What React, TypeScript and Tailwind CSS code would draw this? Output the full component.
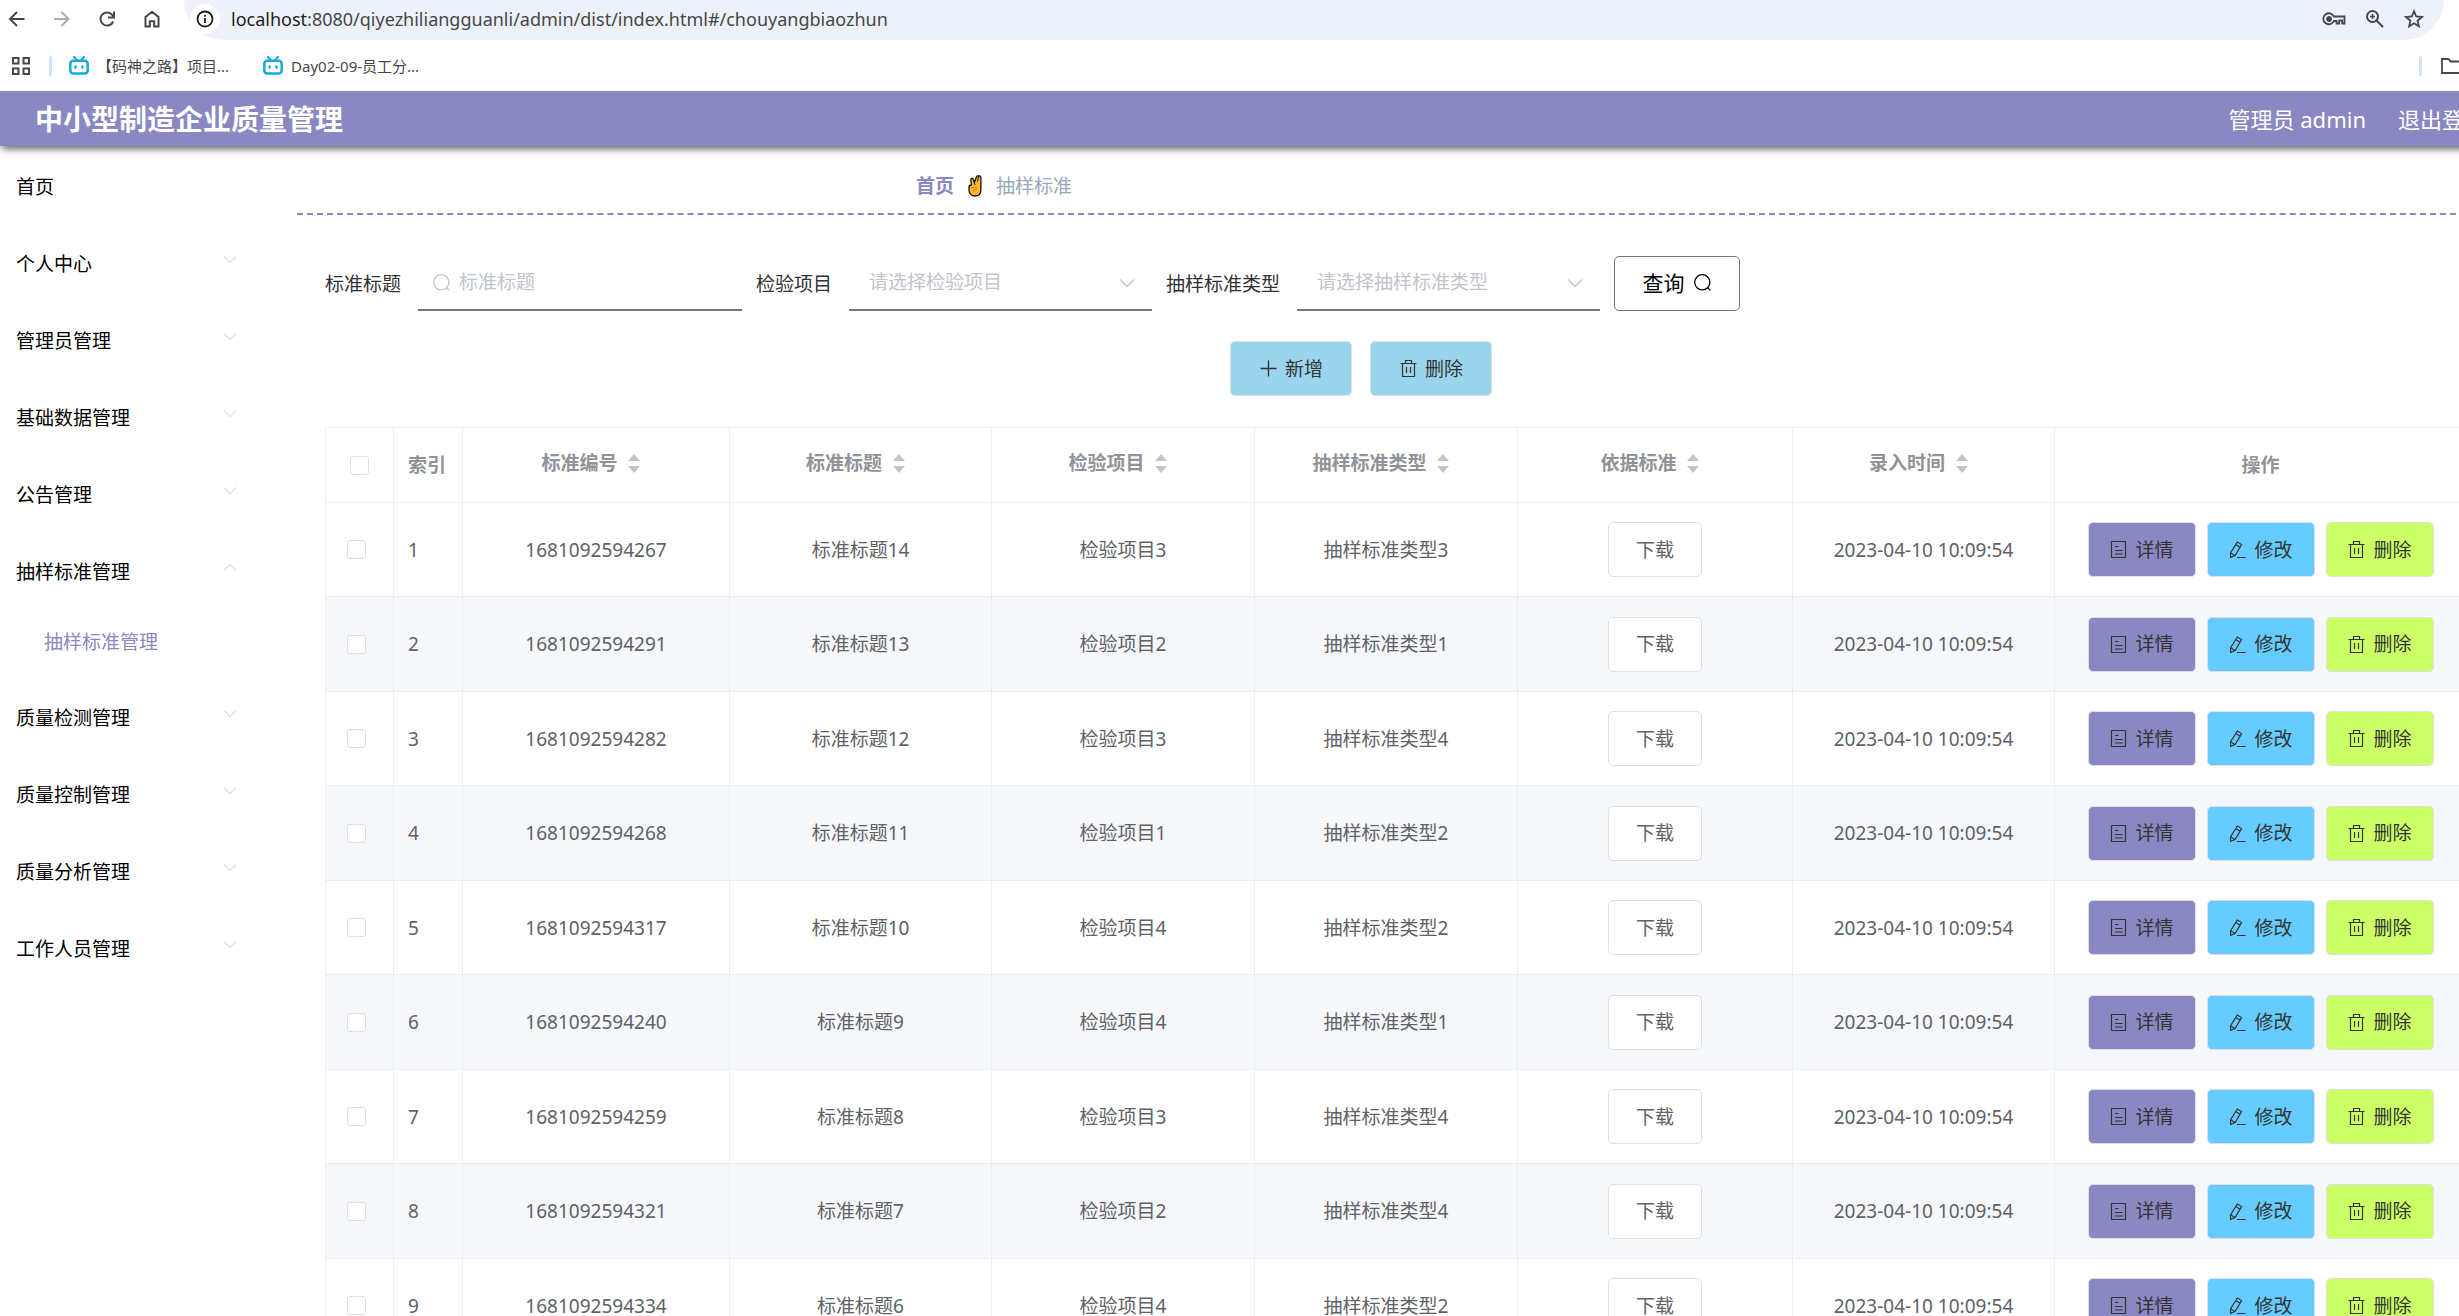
import React from 'react'

const menuItems = [
    { title: "首页" },
    { title: "个人中心", children: [] },
    { title: "管理员管理", children: [] },
    { title: "基础数据管理", children: [] },
    { title: "公告管理", children: [] },
    { title: "抽样标准管理", open: true, children: ["抽样标准管理"] },
    { title: "质量检测管理", children: [] },
    { title: "质量控制管理", children: [] },
    { title: "质量分析管理", children: [] },
    { title: "工作人员管理", children: [] },
];

const sortableColumns = ["标准编号", "标准标题", "检验项目", "抽样标准类型", "依据标准", "录入时间"];

const rows = [
    { id: 1, code: "1681092594267", title: "标准标题14", item: "检验项目3", type: "抽样标准类型3" },
    { id: 2, code: "1681092594291", title: "标准标题13", item: "检验项目2", type: "抽样标准类型1" },
    { id: 3, code: "1681092594282", title: "标准标题12", item: "检验项目3", type: "抽样标准类型4" },
    { id: 4, code: "1681092594268", title: "标准标题11", item: "检验项目1", type: "抽样标准类型2" },
    { id: 5, code: "1681092594317", title: "标准标题10", item: "检验项目4", type: "抽样标准类型2" },
    { id: 6, code: "1681092594240", title: "标准标题9", item: "检验项目4", type: "抽样标准类型1" },
    { id: 7, code: "1681092594259", title: "标准标题8", item: "检验项目3", type: "抽样标准类型4" },
    { id: 8, code: "1681092594321", title: "标准标题7", item: "检验项目2", type: "抽样标准类型4" },
    { id: 9, code: "1681092594334", title: "标准标题6", item: "检验项目4", type: "抽样标准类型2" },
];

const createdAt = "2023-04-10 10:09:54";

const SearchIcon = () => (
  <svg className="w-[19px] h-[19px] shrink-0" viewBox="0 0 19 19" fill="none" stroke="currentColor" strokeWidth="1.3">
    <circle cx="9.3" cy="9.3" r="7.6" />
    <path d="M14.6 14.6l2.8 2.8" />
  </svg>
)

const PlusIcon = () => (
  <svg className="w-[19px] h-[19px] shrink-0" viewBox="0 0 19 19" fill="none" stroke="currentColor" strokeWidth="1.3">
    <path d="M1.5 9.5h16M9.5 1.5v16" />
  </svg>
)

const DeleteIcon = () => (
  <svg className="w-[19px] h-[19px] shrink-0" viewBox="0 0 19 19" fill="none" stroke="currentColor" strokeWidth="1.2">
    <path d="M1.5 4.5h16M6.5 4.5v-3h6v3M3.5 4.5v13h12v-13M7.5 8v6M11.5 8v6" />
  </svg>
)

const DetailIcon = () => (
  <svg className="w-[19px] h-[19px] shrink-0" viewBox="0 0 19 19" fill="none" stroke="currentColor" strokeWidth="1.2">
    <path d="M2.5 1.5h14v16h-14zM6 6.5h3.5M6 10.5h7.5M6 14h7.5" />
  </svg>
)

const EditIcon = () => (
  <svg className="w-[19px] h-[19px] shrink-0" viewBox="0 0 19 19" fill="none" stroke="currentColor" strokeWidth="1.2">
    <path d="M9.3 2l4.3 2.6-6.5 11L2.6 17.4 2.5 13zM7.8 4.6l4.3 2.6M2.6 13l4.5 2.6M9 17.5h8.5" />
  </svg>
)

const ChevronIcon = ({ up = false, className = "" }: { up?: boolean; className?: string }) => (
  <svg className={className} viewBox="0 0 16 10" fill="none" stroke="currentColor" strokeWidth="1.5">
    <path d={up ? "M1 8.5l7-7 7 7" : "M1 1.5l7 7 7-7"} />
  </svg>
)

const SortIcon = () => (
  <span className="w-[33px] h-[20px] flex items-center justify-center">
    <svg className="w-3 h-[19px] text-[#c0c4cc]" viewBox="0 0 12 19" fill="currentColor">
      <path d="M6 0l6 7H0zM0 12h12l-6 7z" />
    </svg>
  </span>
)

const VictoryIcon = () => (
  <svg className="w-[14px] h-[22px]" viewBox="0 0 14 22" stroke="#111" strokeWidth="1.3" strokeLinejoin="round">
    <path
      d="M1 12.5c0-2 1-2.5 2.5-2.5L2.8 5c-.2-2 2-2.4 2.5-.6l1 3L8.5 1.8c.6-1.5 1.8-1 2-.4.4-1 2.3-.9 2.4.8V14.5c0 4-2 6.5-5.8 6.5S1 18.5 1 15z"
      fill="#fdb92e"
    />
    <path d="M6.3 7.5l.8 2.5M10.5 1.6l-1 5" fill="none" strokeWidth="1" />
    <path d="M3 12.5h5c1.5 0 1.5 2 0 2H5.5M6 14.5V17" fill="none" stroke="#d98612" strokeWidth="1" />
  </svg>
)

const BilibiliIcon = () => (
  <svg className="w-[20px] h-[19px] shrink-0" viewBox="0 0 20 19" fill="none" stroke="#12a8e0">
    <rect x="1.3" y="4.8" width="17.4" height="12.6" rx="3" strokeWidth="2.5" />
    <path d="M5 1l2.8 3M15 1l-2.8 3" strokeWidth="2" strokeLinecap="round" />
    <path d="M6.5 10v2M13.5 10v2" strokeWidth="2" strokeLinecap="round" />
  </svg>
)

const BrowserBar = () => (
  <div className="text-[#474747]">
    <div className="flex items-start h-10 pl-2 pr-[15px]">
      <div className="flex items-center gap-[27px] h-[38px]">
        <button type="button" aria-label="后退">
          <svg className="w-[18px] h-[18px]" viewBox="0 0 18 18" fill="none" stroke="currentColor" strokeWidth="2">
            <path d="M16.5 9H2M9 2L2 9l7 7" />
          </svg>
        </button>
        <button type="button" aria-label="前进" className="text-[#ababab]">
          <svg className="w-[18px] h-[18px]" viewBox="0 0 18 18" fill="none" stroke="currentColor" strokeWidth="2">
            <path d="M1 9h14.5M8.5 2l7 7-7 7" />
          </svg>
        </button>
        <button type="button" aria-label="刷新">
          <svg className="w-[18px] h-[18px]" viewBox="0 0 18 18" fill="none" stroke="currentColor" strokeWidth="2">
            <path d="M15.2 11.5A6.6 6.6 0 1 1 14.5 5.2L16 7.2M16 1.5v6h-6" />
          </svg>
        </button>
        <button type="button" aria-label="主页">
          <svg className="w-[18px] h-[18px]" viewBox="0 0 18 18" fill="none" stroke="currentColor" strokeWidth="2">
            <path d="M2.5 7L9 1.8 15.5 7v9.5h-4.3v-5.3H6.8v5.3H2.5z" />
          </svg>
        </button>
      </div>
      <div className="flex flex-1 items-center h-10 ml-[23px] pl-[6px] pr-5 pb-[2px] bg-[#ecf1fa] rounded-b-full">
        <span className="flex items-center justify-center w-[30px] h-[30px] rounded-full bg-white">
          <svg className="w-[18px] h-[18px] text-[#1f1f1f]" viewBox="0 0 18 18" fill="none" stroke="currentColor" strokeWidth="1.8">
            <circle cx="9" cy="9" r="7.5" />
            <path d="M9 8v5M9 5v1.8" />
          </svg>
        </span>
        <span className="flex-1 ml-[11px] text-[18px] leading-6">
          <span className="text-[#1f1f1f]">localhost</span>:8080/qiyezhiliangguanli/admin/dist/index.html#/chouyangbiaozhun
        </span>
        <div className="flex items-center gap-[19px]">
          <svg className="w-[24px] h-[18px]" viewBox="0 0 24 18" fill="none" stroke="currentColor" strokeWidth="1.8">
            <path d="M11.8 6.5h10.7v7h-2.3v-3h-3v3h-2.7V11h-2.7a5.5 5.5 0 1 1 0-4.5z" />
            <circle cx="7" cy="9" r="2" fill="currentColor" />
          </svg>
          <svg className="w-[20px] h-[20px]" viewBox="0 0 20 20" fill="none" stroke="currentColor" strokeWidth="2">
            <circle cx="7.5" cy="7.5" r="5.5" />
            <path d="M11.5 11.5L18 18" />
            <path d="M7.5 5v5M5 7.5h5" strokeWidth="1.5" />
          </svg>
          <svg className="w-[20px] h-[20px]" viewBox="0 0 20 20" fill="none" stroke="currentColor" strokeWidth="1.8">
            <path d="M10 2.2l2.2 5.3 5.7.5-4.3 3.7 1.3 5.6-4.9-3-4.9 3 1.3-5.6L2.1 8l5.7-.5z" />
          </svg>
        </div>
      </div>
    </div>

    <div className="flex items-center h-[51px] pl-3 text-[15px] leading-5">
      <svg className="w-[18px] h-[18px]" viewBox="0 0 18 18" fill="none" stroke="currentColor" strokeWidth="2">
        <path d="M1 1h5.5v5.5H1zM11.5 1H17v5.5h-5.5zM1 11.5h5.5V17H1zM11.5 11.5H17V17h-5.5z" />
      </svg>
      <span className="w-[3px] h-5 ml-[19px] rounded bg-[#d3e3fd]" />
      <a href="#" className="flex items-center gap-2 ml-[17px]">
        <BilibiliIcon />
        【码神之路】项目...
      </a>
      <a href="#" className="flex items-center gap-2 ml-[34px]">
        <BilibiliIcon />
        Day02-09-员工分...
      </a>
      <div className="flex items-center gap-[19px] ml-auto -mr-1">
        <span className="w-[3px] h-5 rounded bg-[#d3e3fd]" />
        <svg className="w-[22px] h-[18px]" viewBox="0 0 22 18" fill="none" stroke="currentColor" strokeWidth="1.8">
          <path d="M1 2h6.5l2 2.5H21V16H1z" />
        </svg>
      </div>
    </div>
  </div>
)

const Header = () => (
  <header className="relative flex items-center justify-between h-[55px] pl-[35px] bg-[#8a88c2] text-white shadow-[0_5px_7px_-2px_rgba(0,0,0,0.6)]">
    <h1 className="text-[28px] leading-9 font-bold">中小型制造企业质量管理</h1>
    <div className="flex gap-8 text-[22px] leading-8">
      <span>管理员 admin</span>
      <a href="#" className="whitespace-nowrap">退出登录</a>
    </div>
  </header>
)

const Sidebar = () => (
  <nav className="w-[297px] shrink-0 pt-[2px] text-black">
    {menuItems.map((menu) => (
      <div key={menu.title}>
        <button type="button" className="flex items-center justify-between w-full h-[77px] pl-4 pr-[60px]">
          {menu.title}
          {menu.children && (
            <ChevronIcon up={menu.open} className="w-[14px] h-[9px] mb-2 text-[#e0e1ea]" />
          )}
        </button>
        {menu.children?.map((child) => (
          <a key={child} href="#" className="block h-[69px] pl-[44px] leading-[64px] text-[#8a88c2]">
            {child}
          </a>
        ))}
      </div>
    ))}
  </nav>
)

const FilterSelect = ({ id, label, placeholder }: { id: string; label: string; placeholder: string }) => (
  <div className="flex items-center gap-[17px]">
    <label htmlFor={id}>{label}</label>
    <div className="relative w-[303px] h-[55px]">
      <select
        id={id}
        className="w-full h-full px-5 pb-[2px] appearance-none bg-white border-b-2 border-[#777] text-[#c0c4cc] outline-none"
      >
        <option>{placeholder}</option>
      </select>
      <ChevronIcon className="absolute right-[17px] top-[22px] w-4 h-[10px] text-[#c0c4cc] pointer-events-none" />
    </div>
  </div>
)

const SearchForm = () => (
  <form className="flex items-center gap-[14px] text-[#303133]">
    <div className="flex items-center gap-[17px]">
      <label htmlFor="title">标准标题</label>
      <div className="flex items-center gap-2 w-[324px] h-[55px] pl-[14px] border-b-2 border-[#777] text-[#c0c4cc]">
        <SearchIcon />
        <input
          id="title"
          type="text"
          placeholder="标准标题"
          className="flex-1 min-w-0 pb-[2px] outline-none placeholder:text-[#c0c4cc]"
        />
      </div>
    </div>
    <FilterSelect id="item" label="检验项目" placeholder="请选择检验项目" />
    <FilterSelect id="type" label="抽样标准类型" placeholder="请选择抽样标准类型" />
    <button
      type="button"
      className="flex items-center justify-center gap-2 w-[126px] h-[55px] pb-[2px] border border-[#777] rounded-[5px] text-[21px] text-black"
    >
      查询
      <SearchIcon />
    </button>
  </form>
)

const actionClass = "flex items-center justify-center gap-[7px] h-[55px] border border-[#dcdfe6] rounded-[5px] text-[#333]"

const StandardTable = () => (
  <table className="w-full table-fixed border-separate border-spacing-0 border-l border-t border-[#ebeef5] text-center text-[#606266]">
    <colgroup>
      <col className="w-[68px]" />
      <col className="w-[69px]" />
      <col className="w-[267px]" />
      <col className="w-[262px]" />
      <col className="w-[263px]" />
      <col className="w-[263px]" />
      <col className="w-[275px]" />
      <col className="w-[262px]" />
      <col className="w-[412px]" />
    </colgroup>
    <thead>
      <tr className="h-[75px] text-[#909399] [&>th]:border-r [&>th]:border-b [&>th]:border-[#ebeef5]">
        <th>
          <input
            type="checkbox"
            aria-label="全选"
            className="block mx-auto w-[19px] h-[19px] appearance-none bg-white border border-[#dcdfe6] rounded-[3px]"
          />
        </th>
        <th className="pl-[14px] text-left">索引</th>
        {sortableColumns.map((column) => (
          <th key={column}>
            <div className="flex items-center justify-center pb-1">
              {column}
              <SortIcon />
            </div>
          </th>
        ))}
        <th>操作</th>
      </tr>
    </thead>
    <tbody>
      {rows.map((row) => (
        <tr
          key={row.id}
          className="h-[94px] even:h-[95px] even:bg-[#f5f7fb] [&>td]:border-r [&>td]:border-b [&>td]:border-[#ebeef5]"
        >
          <td className="pl-[21px]">
            <input
              type="checkbox"
              aria-label={row.title}
              className="block w-[19px] h-[19px] appearance-none bg-white border border-[#dcdfe6] rounded-[3px]"
            />
          </td>
          <td className="pl-[14px] text-left">{row.id}</td>
          <td>{row.code}</td>
          <td>{row.title}</td>
          <td>{row.item}</td>
          <td>{row.type}</td>
          <td>
            <button type="button" className="w-[94px] h-[55px] bg-white border border-[#dcdfe6] rounded-[5px]">
              下载
            </button>
          </td>
          <td>{createdAt}</td>
          <td>
            <div className="flex justify-center gap-[11px]">
              <button type="button" className={`${actionClass} w-[108px] bg-[#8a88c2]`}>
                <DetailIcon />
                详情
              </button>
              <button type="button" className={`${actionClass} w-[108px] bg-[#66ccff]`}>
                <EditIcon />
                修改
              </button>
              <button type="button" className={`${actionClass} w-[108px] bg-[#ccff66]`}>
                <DeleteIcon />
                删除
              </button>
            </div>
          </td>
        </tr>
      ))}
    </tbody>
  </table>
)

export default function App() {
  return (
    <div className="h-screen overflow-hidden bg-white font-['Noto_Sans','Noto_Sans_CJK_SC',sans-serif] text-[19px] leading-7">
      <BrowserBar />
      {/* the admin page is a little wider than the window */}
      <div className="w-[calc(100%+27px)]">
        <Header />
        <div className="flex">
          <Sidebar />
          <main className="flex-1 min-w-0">
            <div className="flex items-center gap-[14px] h-[69px] pl-[619px] pt-3 border-b-2 border-dashed border-[#8a88c2]">
              <a href="#" className="font-bold text-[#8a88c2]">首页</a>
              <VictoryIcon />
              <span className="text-[#97a8be]">抽样标准</span>
            </div>

            <div className="pl-7 pr-[19px] pt-[41px]">
              <SearchForm />

              <div className="flex justify-center gap-[18px] mt-[30px] mb-[31px] pr-[70px]">
                <button type="button" className={`${actionClass} w-[122px] bg-[#9bd4ed]`}>
                  <PlusIcon />
                  新增
                </button>
                <button type="button" className={`${actionClass} w-[122px] bg-[#9bd4ed]`}>
                  <DeleteIcon />
                  删除
                </button>
              </div>

              <StandardTable />
            </div>
          </main>
        </div>
      </div>
    </div>
  )
}
